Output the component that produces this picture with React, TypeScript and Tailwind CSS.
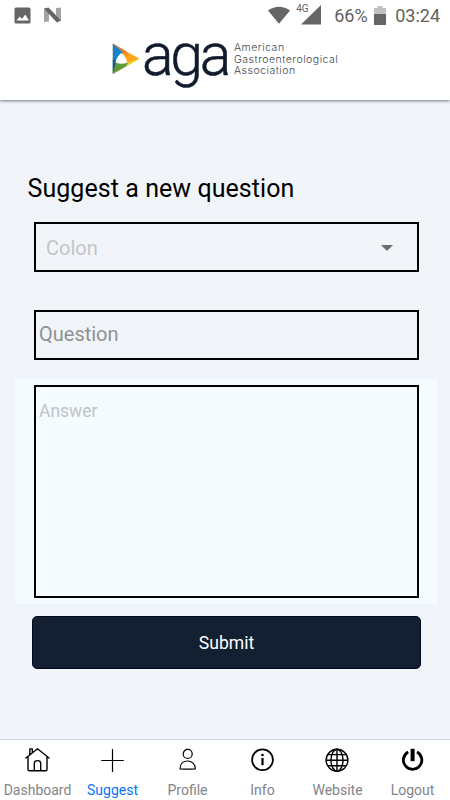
import type { ReactNode } from "react";

interface Tab {
  label: string;
  icon: ReactNode;
}

const tabs: Tab[] = [
  {
    label: "Dashboard",
    icon: (
      <svg width="26" height="26" viewBox="0 0 26 26" fill="none" stroke="#000" strokeWidth="1.4" strokeLinecap="round" strokeLinejoin="round">
        <path d="M1 11 12.5 1.8 24 11M3 9.8v12.6q0 1.3 1.3 1.3h16.4q1.3 0 1.3-1.3V9.8M4.8 7.9v-6h2.5v3.9M9.3 23.5v-7.2q0-2.7 3.2-2.7t3.2 2.7v7.2" />
      </svg>
    ),
  },
  {
    label: "Suggest",
    icon: (
      <svg width="26" height="26" viewBox="0 0 26 26" stroke="#000" strokeWidth="1.2">
        <path d="M12.5 2v23M1.2 13.5h22.6" />
      </svg>
    ),
  },
  {
    label: "Profile",
    icon: (
      <svg width="26" height="26" viewBox="0 0 26 26" fill="none" stroke="#000" strokeWidth="1.2">
        <circle cx="12.7" cy="6.9" r="4.5" />
        <path d="M5 22c0-5 3-8 7.5-8s7.8 3 7.8 8q-7.5.4-15.3 0Z" strokeLinejoin="round" />
      </svg>
    ),
  },
  {
    label: "Info",
    icon: (
      <svg width="26" height="26" viewBox="0 0 26 26" fill="none" stroke="#000">
        <circle cx="12.5" cy="12.7" r="10.4" strokeWidth="1.8" />
        <path d="M12.5 11v7.2" strokeWidth="2.2" />
        <circle cx="12.5" cy="8" r="1.3" fill="#000" stroke="none" />
      </svg>
    ),
  },
  {
    label: "Website",
    icon: (
      <svg width="26" height="26" viewBox="0 0 26 26" fill="none" stroke="#000" strokeWidth="1.4">
        <circle cx="12" cy="13.2" r="10.9" />
        <ellipse cx="12" cy="13.2" rx="6" ry="10.9" />
        <path d="M12 2.3v21.8M1.1 13.2h21.8M3 7.6h18M3 18.8h18" />
      </svg>
    ),
  },
  {
    label: "Logout",
    icon: (
      <svg width="26" height="26" viewBox="0 0 26 26" fill="none" stroke="#000">
        <path d="M8.2 5a9.2 9.2 0 1 0 8.8 0" strokeWidth="2.8" />
        <path d="M12.6 1.8v12.4" strokeWidth="4" />
      </svg>
    ),
  },
];

function StatusBar() {
  return (
    <div className="flex h-8 items-center pr-[10px] pl-[14px] text-[#626262]">
      <svg className="-mt-[2px]" width="17" height="17" viewBox="0 0 17 17">
        <rect x="0.5" y="0.5" width="16" height="16" rx="1.5" fill="#656565" />
        <path d="M2.5 13.5 5.7 9.4l2.2 2.5 3.4-4.3 3.7 5.9Z" fill="#fff" />
      </svg>
      <svg className="-mt-[2px] ml-[13px]" width="17" height="16" viewBox="0 0 17 16">
        <path d="M0 1.5 5 5v9.5L0 15ZM12 1l5-.5v13.8l-5-3Z" fill="#a3a3a3" />
        <path d="M0 1.5 4.5.5 17 13.5 12.8 15.5Z" fill="#656565" />
      </svg>
      <div className="-mt-[2px] ml-auto flex items-center">
        <svg width="22" height="18" viewBox="0 0 22 18">
          <path d="M0 4.5Q11-3 22 4.5L11 17.8Z" fill="#656565" />
        </svg>
        <div className="ml-[6px] flex w-[26px] items-start">
          <span className="-mt-[2px] w-[5px] text-[10px] leading-[12px] whitespace-nowrap">4G</span>
          <svg width="21" height="20" viewBox="0 0 21 20">
            <path d="M20 0v19.5H0Z" fill="#656565" />
          </svg>
        </div>
        <span className="ml-[12px] w-[32px] text-[18px] whitespace-nowrap">66%</span>
        <svg className="ml-[8px]" width="12" height="19" viewBox="0 0 12 19">
          <path d="M3.5 0h5v2H12v6H0V2h3.5Z" fill="#c1c1c1" />
          <path d="M0 8h12v11H0Z" fill="#656565" />
        </svg>
        <span className="ml-[9px] text-[18px]">03:24</span>
      </div>
    </div>
  );
}

function Logo() {
  return (
    <div className="flex h-[68px] pl-[112px]">
      <svg className="mt-[11px]" width="28" height="32" viewBox="0 0 28 32">
        <path d="M.8.5 27.3 15.7.8 31Z" fill="#ffa51f" />
        <path d="m.8.5 13 7.5 2.4 5L8 8Z" fill="#f47b29" />
        <path d="M.8.5 11 9.5 4 20 .8 31Z" fill="#1684cc" />
        <path d="M.8 16.5 4.2 17v4.5L.8 31Z" fill="#155a91" />
        <path d="m27.3 15.7-13.5 7.8.5-3.5Z" fill="#dcd922" />
        <path d="M.8 31 4 19.5l11.8.5-1.6 3.3Z" fill="#629b3b" />
        <path d="M9.3 9.9q5.2 3.8 5.8 9.9-5.7 2.2-11.6-.2 1-6.2 5.8-9.7Z" fill="#fff" />
      </svg>
      <span className="-mt-[8.5px] ml-[2px] w-[92px] text-[59px] leading-[62px] font-light tracking-[-3.3px] text-[#111b2d] [-webkit-text-stroke:0.5px_#111b2d]">aga</span>
      <div className="mt-[10px] font-['Inter'] text-[10.5px] leading-[11.7px] font-light tracking-[0.5px] text-[#424750]">
        <div>American</div>
        <div>Gastroenterological</div>
        <div>Association</div>
      </div>
    </div>
  );
}

export default function App() {
  return (
    <div className="flex h-[800px] w-[450px] flex-col overflow-hidden bg-[#f1f5f9] font-['Roboto',sans-serif]">
      <header className="z-10 h-[100px] shrink-0 bg-white shadow-[0_1px_3px_rgba(0,0,0,0.5)]">
        <StatusBar />
        <Logo />
      </header>

      <main className="flex-1 pt-[73px]">
        <h1 className="ml-[27.5px] text-[25px] leading-[32px] tracking-[0.06px] text-black">Suggest a new question</h1>

        <div className="mt-[17px] ml-[34px] flex h-[50px] w-[385px] items-center justify-between border-2 border-black pt-[2px] pr-[24px] pl-[10px]">
          <span className="text-[20px] text-[#c4c4c8]">Colon</span>
          <svg width="12" height="6" viewBox="0 0 12 6">
            <path d="M0 0h12L6 6Z" fill="#6b6d6f" />
          </svg>
        </div>

        <div className="mt-[38px] ml-[34px] h-[50px] w-[385px] border-2 border-black pl-[3px]">
          <span className="block text-[20px] leading-[44px] text-[#8e9193]">Question</span>
        </div>

        <div className="mt-[19px] ml-[15px] h-[225px] w-[423px] bg-[#f4fcff] pt-[6px] pl-[19px]">
          <div className="h-[213px] w-[385px] border-2 border-black pt-[12px] pl-[3px]">
            <span className="block text-[17.5px] leading-[24px] text-[#c1c2c3]">Answer</span>
          </div>
        </div>

        <button className="mt-[12px] ml-[32px] h-[53px] w-[389px] rounded-[5px] border border-[#05091f] bg-[#132031] pt-[2px] text-[17.6px] text-white">
          Submit
        </button>
      </main>

      <nav className="grid h-[61px] shrink-0 grid-cols-6 border-t border-[#d5d8db] bg-white">
        {tabs.map((tab) => (
          <div key={tab.label} className="flex flex-col items-center pt-[7px]">
            {tab.icon}
            <span
              className={`mt-[8px] text-[14px] leading-[18px] ${
                tab.label === "Suggest" ? "text-[#0a74f5]" : "text-[#838488]"
              }`}
            >
              {tab.label}
            </span>
          </div>
        ))}
      </nav>
    </div>
  );
}
